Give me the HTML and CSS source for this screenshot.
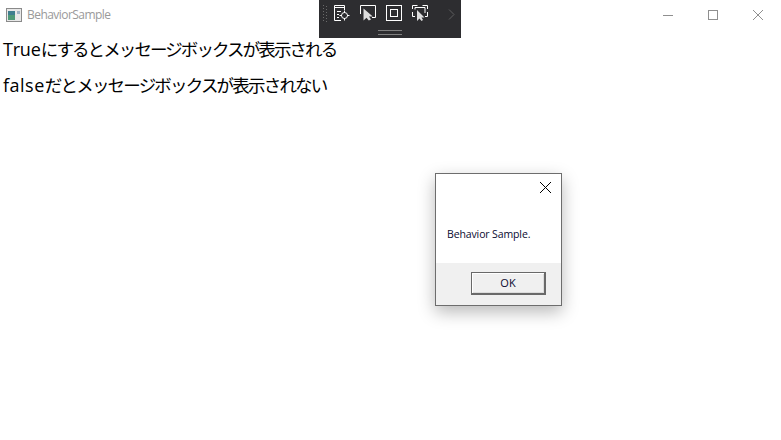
FILE: index.html
```html
<!DOCTYPE html>
<html lang="ja">
<head>
<meta charset="utf-8">
<title>BehaviorSample</title>
<link rel="stylesheet" href="styles.css">
</head>
<body>
<header class="titlebar">
  <svg class="app-icon" width="16" height="14" viewBox="0 0 16 14">
    <rect x="0.5" y="0.5" width="15" height="13" fill="#e8e8e8" stroke="#8a8a8a"/>
    <rect x="2" y="3" width="7" height="9" fill="#3f7f8f"/>
    <rect x="2" y="7" width="7" height="5" fill="#4f9a78"/>
    <rect x="11" y="3" width="3" height="3" fill="#9fb4c4"/>
  </svg>
  <span class="app-title">BehaviorSample</span>
  <div class="window-controls">
    <svg width="10" height="10" viewBox="0 0 10 10"><path d="M0 5.500H10" stroke="#8f8f8f"/></svg>
    <svg width="10" height="10" viewBox="0 0 10 10"><rect x="0.5" y="0.5" width="9" height="9" fill="none" stroke="#8f8f8f"/></svg>
    <svg width="10" height="10" viewBox="0 0 10 10"><path d="M0 0L10 10M10 0L0 10" stroke="#8f8f8f"/></svg>
  </div>
</header>
<main class="content">
  <p class="line">True<span class="ja">にするとメッセージボックスが表示される</span></p>
  <p class="line line-false">false<span class="ja">だとメッセージボックスが表示されない</span></p>
</main>

<div class="devbar">
  <div class="devbar-row">
    <svg class="grip" width="5" height="18" viewBox="0 0 5 18"><path d="M0.5 0V18M3.5 1V18" stroke="#6a6a6a" stroke-dasharray="1 2"/></svg>
    <svg class="tool tool-live" width="16" height="17" viewBox="0 0 16 17" fill="none" stroke="#fff"><path d="M.5 15.500V.5H10.500V5M.5 2.500H10.500M7 15.500H.5M3 6.500H7M3 9.500H5M3 12.500H5"/><circle cx="10.500" cy="10.500" r="3"/><path d="M10.500 5.500V8M10.500 13V15.500M5.500 10.500H8M13 10.500H15.500" /></svg>
    <svg class="tool tool-select" width="16" height="16" viewBox="0 0 16 16" fill="none" stroke="#fff"><path d="M.5 9V.5H15.500V12.500H12"/><path d="M3.500 3.500V15.500L6.500 12.800L8.800 15.500L11 14.500L9 11.500H12.800Z" fill="#ddd" stroke="none"/></svg>
    <svg class="tool tool-layout" width="16" height="16" viewBox="0 0 16 16" fill="none" stroke="#fff"><rect x=".5" y=".5" width="15" height="15"/><rect x="4.500" y="4.500" width="7" height="7"/></svg>
    <svg class="tool tool-adorner" width="16" height="16" viewBox="0 0 16 16" fill="none" stroke="#fff"><path d="M.5 4V.5H5.500M10.500 .5H15.500V4M.5 7V11.500H3M15.500 7V11.500H13M3 4.500V2.500H13V8"/><path d="M5 5V16L7.500 13.500L9.500 16L11 15L9.500 12.500H12.500Z" fill="#ddd" stroke="none"/></svg>
    <svg class="chevron" width="7" height="11" viewBox="0 0 7 11" fill="none" stroke="#5e5e5e"><path d="M1 .5L6 5.500L1 10.500"/></svg>
  </div>
  <div class="devbar-handle"></div>
</div>

<div class="dialog">
  <div class="dialog-body">
    <svg class="dialog-close" width="11" height="11" viewBox="0 0 11 11"><path d="M0 0L11 11M11 0L0 11" stroke="#000"/></svg>
    <p class="dialog-text">Behavior Sample.</p>
  </div>
  <div class="dialog-footer">
    <button class="dialog-ok">OK</button>
  </div>
</div>
</body>
</html>
```
FILE: styles.css
```css
html, body { margin: 0; padding: 0; height: 100%; background: #fff; overflow: hidden; }
body { position: relative; font-family: "Open Sans", "Noto Sans CJK JP", sans-serif; }

.titlebar { display: flex; align-items: center; height: 30px; padding-left: 6px; box-sizing: border-box; }
.app-icon { flex: none; }
.app-title { margin-left: 5px; font-size: 12px; line-height: 16px; color: #9a9a9a; letter-spacing: -0.55px; }
.window-controls { margin-left: auto; display: flex; gap: 35px; padding-right: 18px; }

.content { padding-left: 3px; padding-top: 6px; }
.line { margin: 0 0 10px; font-size: 18px; line-height: 26px; color: #000; white-space: nowrap; letter-spacing: -0.2px; }
.ja { font-family: "Noto Sans CJK JP", sans-serif; font-size: 17.5px; letter-spacing: -1.9px; }
.line-false { letter-spacing: 0.5px; }
.line-false .ja { letter-spacing: -1.8px; }

.devbar { position: absolute; left: 319px; top: 0; width: 142px; height: 38px; background: #2d2d30; }
.devbar-row { display: flex; align-items: flex-start; height: 26px; padding: 5px 0 0 4px; box-sizing: border-box; }
.devbar-row svg { flex: none; }
.grip { margin-right: 6px; }
.tool-live { margin-right: 10px; }
.tool-select { margin-right: 10px; }
.tool-layout { margin-right: 10px; }
.chevron { margin: 4px 0 0 20px; }
.devbar-handle { width: 24px; height: 3px; margin: 4px 0 0 59px; border-top: 1px solid #808080; border-bottom: 1px solid #808080; }

.dialog { position: absolute; left: 435px; top: 173px; width: 127px; height: 133px; box-sizing: border-box; border: 1px solid #6d6d6d; background: #fff; display: flex; flex-direction: column; box-shadow: 0 6px 16px rgba(0,0,0,.28); }
.dialog-body { flex: 1; position: relative; }
.dialog-close { position: absolute; right: 10px; top: 8px; }
.dialog-text { margin: 53px 0 0 11px; font-size: 10.5px; line-height: 14px; color: #0a0a30; letter-spacing: -0.12px; white-space: nowrap; }
.dialog-footer { height: 42px; background: #f0f0f0; display: flex; justify-content: flex-end; padding: 9px 15px 0 0; box-sizing: border-box; }
.dialog-ok { width: 75px; height: 23px; box-sizing: border-box; padding: 0; background: #f0f0f0; border: 1px solid #696969; border-right-width: 2px; border-bottom-width: 2px; box-shadow: inset 1px 1px 0 #fff, inset -1px -1px 0 #dcdcdc; font-family: inherit; font-size: 11px; line-height: 18px; color: #0a0a30; }
```
